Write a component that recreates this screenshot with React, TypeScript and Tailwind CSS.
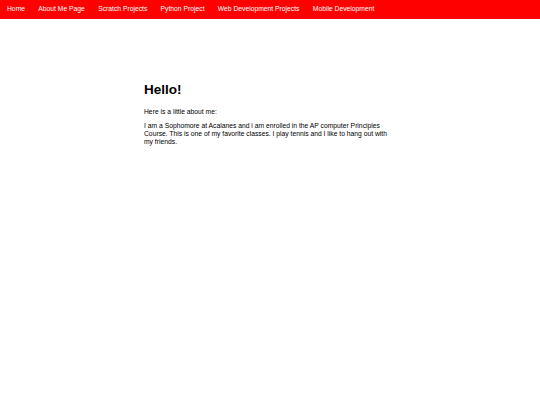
export default function App() {
  const links = ["Home", "About Me Page", "Scratch Projects", "Python Project", "Web Development Projects", "Mobile Development"];
  return (
    <div className="min-h-[405px] bg-white" style={{ fontFamily: '"Liberation Sans", Arial, sans-serif' }}>
      <nav className="flex h-[19px] items-center bg-[#ff0000] px-[7px] gap-[13.3px]">
        {links.map((l) => (
          <a key={l} className="text-[6.75px] leading-none text-white">{l}</a>
        ))}
      </nav>
      <main className="mx-auto w-[252px] pt-[63px]">
        <h1 className="text-[13.5px] font-bold leading-[16px] text-black">Hello!</h1>
        <p className="mt-[10px] text-[6.75px] leading-[8px] text-black">Here is a little about me:</p>
        <p className="mt-[6px] text-[6.75px] leading-[8px] text-black">
          I am a Sophomore at Acalanes and i am enrolled in the AP computer Principles Course. This is one of my favorite classes. I play tennis and I like to hang out with my friends.
        </p>
      </main>
    </div>
  );
}
